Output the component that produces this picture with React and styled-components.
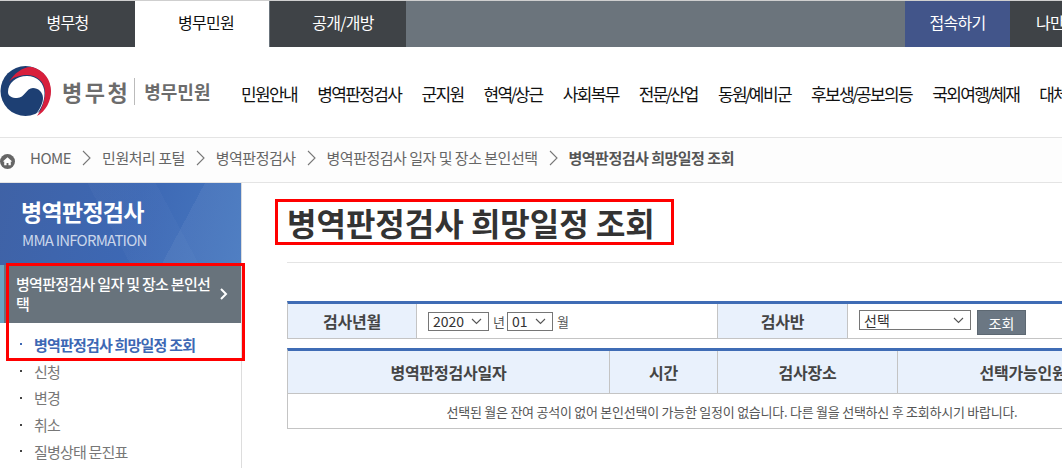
import React from 'react'
import styled, { createGlobalStyle } from 'styled-components'

const font = `"Noto Sans CJK KR", "Noto Sans", sans-serif`

const selectArrow = `url("data:image/svg+xml,%3Csvg xmlns='http://www.w3.org/2000/svg' width='11' height='7'%3E%3Cpath d='M1 1l4.500 4.500L10 1' fill='none' stroke='%23555' stroke-width='1.100'/%3E%3C/svg%3E")`

const GlobalStyle = createGlobalStyle`
  html, body {
    margin: 0;
    padding: 0;
    background: #fff;
    overflow: hidden;
  }
  body {
    font-family: ${font};
  }
`

const Page = styled.div`
  width: 1062px;
  height: 468px;
  overflow: hidden;
`

const TopBar = styled.div`
  display: flex;
  height: 46px;
  background: #6b747c;
  border-top: 1px solid #cfcfcf;
`

const TopTab = styled.a`
  width: ${(p) => p.$width}px;
  flex: none;
  box-sizing: border-box;
  display: flex;
  align-items: center;
  justify-content: ${(p) => (p.$start ? 'flex-start' : 'center')};
  padding: 0 0 4px ${(p) => p.$indent || 0}px;
  overflow: hidden;
  font-size: 16px;
  letter-spacing: -0.700px;
  white-space: nowrap;
  color: ${(p) => (p.$active ? '#111' : '#fff')};
  background: ${(p) => (p.$active ? '#fff' : p.$blue ? '#42558a' : '#3f4347')};
  margin-left: ${(p) => p.$gap || 0}px;
`

const Spacer = styled.div`
  flex: 1;
`

const Header = styled.header`
  display: flex;
  align-items: center;
  height: 90px;
  border-bottom: 1px solid #e4e4e4;
  white-space: nowrap;
`

const Logo = styled.div`
  width: 241px;
  flex: none;
  display: flex;
  align-items: center;
  margin-top: -2px;
`

const Emblem = styled.svg`
  width: 52px;
  height: 52px;
  flex: none;
`

const LogoMain = styled.span`
  margin-left: 10px;
  font-size: 22px;
  font-weight: 700;
  letter-spacing: 2.500px;
  color: #6c6c6c;
`

const LogoDivider = styled.i`
  width: 1px;
  height: 27px;
  margin: 0 9px 0 4px;
  background: #bbb;
`

const LogoSub = styled.span`
  font-size: 18px;
  font-weight: 700;
  color: #6c6c6c;
`

const MainNav = styled.nav`
  display: flex;
  gap: 20px;
  margin-top: 3px;
`

const NavLink = styled.a`
  font-size: 17px;
  letter-spacing: -1.600px;
  color: #111;
`

const NavSlash = styled.span`
  margin: 0 -1.100px;
`

const Breadcrumb = styled.div`
  display: flex;
  align-items: center;
  height: 45px;
  box-sizing: border-box;
  padding-bottom: 5px;
  border-bottom: 1px solid #e4e4e4;
  background: #fdfdfd;
  font-size: 15px;
  letter-spacing: -0.500px;
  color: #666;
  white-space: nowrap;
`

const HomeIcon = styled.svg`
  width: 15px;
  height: 15px;
  margin-right: 15px;
  margin-top: 8px;
`

const Chevron = styled.svg`
  width: 9px;
  height: 16px;
  margin: 0 11px 0 11px;
`

const Crumb = styled.span`
  font-weight: ${(p) => (p.$current ? 700 : 400)};
  color: ${(p) => (p.$current ? '#555' : '#666')};
`

const Body = styled.div`
  display: flex;
`

const Sidebar = styled.aside`
  position: relative;
  width: 242px;
  flex: none;
  height: 285px;
  border-right: 1px solid #ddd;
  box-sizing: border-box;
`

const SideTitle = styled.div`
  height: 82px;
  box-sizing: border-box;
  padding: 11px 0 0 21px;
  background:
    linear-gradient(118deg, transparent 72%, rgba(255, 255, 255, 0.05) 72%),
    linear-gradient(62deg, transparent 46%, rgba(255, 255, 255, 0.025) 46%, rgba(255, 255, 255, 0.025) 70%, transparent 70%),
    linear-gradient(105deg, #3f62a6 0%, #3d68b4 55%, #4778c0 100%);
  color: #fff;
`

const SideHeading = styled.div`
  font-size: 23px;
  font-weight: 700;
  line-height: 34px;
  letter-spacing: -0.700px;
`

const SideSub = styled.div`
  font-size: 15px;
  line-height: 20px;
  letter-spacing: -0.800px;
  color: #c9d5ea;
  margin: 2px 0 0 1px;
`

const SideActive = styled.div`
  display: flex;
  align-items: center;
  height: 58px;
  box-sizing: border-box;
  padding: 0 11px 0 12px;
  background: #68737c;
  border-left: 4px solid #6aa5c4;
  color: #fff;
  font-size: 15px;
  font-weight: 500;
  line-height: 20px;
  letter-spacing: -0.700px;
`

const SideActiveLabel = styled.span`
  flex: 1;
  max-width: 198px;
  word-break: break-all;
`

const SideArrow = styled.svg`
  width: 9px;
  height: 12px;
  flex: none;
  margin: 0 0 0 5px;
`

const SubList = styled.ul`
  list-style: none;
  margin: 0;
  padding: 8px 0 0 20px;
`

const SubItem = styled.li`
  display: flex;
  align-items: center;
  height: 26.750px;
  font-size: 15px;
  letter-spacing: -0.800px;
  font-weight: ${(p) => (p.$current ? 700 : 400)};
  color: ${(p) => (p.$current ? '#3d68b4' : '#777')};

  &::before {
    content: '';
    width: 2px;
    height: 2px;
    margin-right: 12px;
    background: ${(p) => (p.$current ? '#3d68b4' : '#444')};
  }
`

const RedBox = styled.div`
  position: absolute;
  left: 6px;
  top: 80px;
  width: 239px;
  height: 98px;
  box-sizing: border-box;
  border: 3px solid #f00;
`

const Content = styled.main`
  flex: 1;
  padding: 16px 0 0 33px;
  min-width: 0;
`

const Title = styled.h1`
  display: inline-block;
  margin: 0;
  padding: 0 16px 0 9px;
  height: 46px;
  box-sizing: border-box;
  border: 3px solid #f00;
  font-size: 32px;
  font-weight: 700;
  line-height: 40px;
  color: #333;
  white-space: nowrap;
`

const TitleRule = styled.div`
  height: 1px;
  margin: 17px 0 38px 12px;
  background: #e4e4e4;
`

const FormGrid = styled.div`
  display: grid;
  grid-template-columns: 129px 301px 130px 1fr;
  width: 862px;
  height: 38px;
  margin-left: 12px;
  box-sizing: border-box;
  border-top: 3px solid #3f6cb5;
  border-bottom: 1px solid #c4c4c4;
  border-left: 1px solid #c4c4c4;
`

const HeadCell = styled.div`
  display: flex;
  align-items: center;
  justify-content: center;
  background: #e9f1fc;
  border-right: 1px solid #c4c4c4;
  font-size: 16px;
  font-weight: 700;
  letter-spacing: -0.200px;
  color: #444;
  white-space: nowrap;
`

const FieldCell = styled.div`
  display: flex;
  align-items: ${(p) => (p.$top ? 'flex-start' : 'center')};
  padding: ${(p) => (p.$top ? '6px' : '0')} 0 0 ${(p) => p.$pad}px;
  border-right: ${(p) => (p.$divider ? '1px solid #c4c4c4' : 'none')};
  font-size: 13px;
  color: #555;
  white-space: nowrap;
`

const Select = styled.select`
  appearance: none;
  width: ${(p) => p.$width}px;
  height: ${(p) => (p.$tall ? 20 : 19)}px;
  margin: 0 3px 0 0;
  padding: 0 0 0 4px;
  box-sizing: border-box;
  border: 1px solid #767676;
  border-radius: 0;
  background: #fff ${selectArrow} no-repeat right 6px center;
  font-family: ${font};
  font-size: 14px;
  line-height: 17px;
  color: #333;
`

const Unit = styled.span`
  margin: 0 2px 0 1px;
  font-size: 13px;
`

const SearchButton = styled.button`
  width: 49px;
  height: 25px;
  margin: 0 0 0 3px;
  padding: 0;
  border: 1px solid #5d6872;
  background: #6b7783;
  color: #fff;
  font-family: ${font};
  font-size: 14px;
`

const ResultGrid = styled.div`
  display: grid;
  grid-template-columns: 322px 108px 180px 1fr;
  width: 862px;
  margin: 9px 0 0 12px;
  box-sizing: border-box;
  border-top: 3px solid #3f6cb5;
  border-left: 1px solid #c4c4c4;
`

const ColHead = styled(HeadCell)`
  height: 42px;
  border-bottom: 1px solid #c4c4c4;
`

const EmptyRow = styled.div`
  grid-column: 1 / -1;
  height: 35px;
  box-sizing: border-box;
  padding-left: 28px;
  line-height: 35px;
  text-align: center;
  border-right: 1px solid #c4c4c4;
  border-bottom: 1px solid #c4c4c4;
  font-size: 13px;
  letter-spacing: -0.250px;
  color: #555;
  white-space: nowrap;
`

const topTabs = [
  { label: '병무청', width: 135 },
  { label: '병무민원', width: 134, active: true, indent: 8 },
  { label: '공개/개방', width: 136, gap: 1, indent: 10 },
]

const navItems = [
  '민원안내', '병역판정검사', '군지원', '현역/상근', '사회복무', '전문/산업',
  '동원/예비군', '후보생/공보의등', '국외여행/체재', '대체역',
]

const crumbs = ['민원처리 포털', '병역판정검사', '병역판정검사 일자 및 장소 본인선택']

const subItems = ['신청', '변경', '취소', '질병상태 문진표']

const CrumbChevron = () => (
  <Chevron viewBox="0 0 9 16">
    <path d="M1 1l7 7-7 7" fill="none" stroke="#777" strokeWidth="1.100" />
  </Chevron>
)

const navLabel = (item) => {
  const [before, after] = item.split('/')
  if (!after) return item
  return (
    <>
      {before}
      <NavSlash>/</NavSlash>
      {after}
    </>
  )
}

const App = () => (
  <Page>
    <GlobalStyle />
    <TopBar>
      {topTabs.map((t) => (
        <TopTab key={t.label} $width={t.width} $active={t.active} $gap={t.gap} $indent={t.indent}>
          {t.label}
        </TopTab>
      ))}
      <Spacer />
      <TopTab $width={105} $blue>접속하기</TopTab>
      <TopTab $width={52} $start $indent={26}>나만의</TopTab>
    </TopBar>

    <Header>
      <Logo>
        <Emblem viewBox="0 0 52 52">
          <circle cx="25.500" cy="26" r="25" fill="#1d3f73" />
          <path d="M9 17C14 8 24 1 32 2C44 5 51 15 51 26C51 36 46 46 37 51C42 44 45 35 45 27C45 16 36 10 27 10C20 10 13 12 9 17Z" fill="#d81f3c" />
          <path d="M8 27C8 18 16 11 27 11C37 11 44.500 18 44.500 28C44.500 37 41 45 35 50.500C40 44 43 38 43 33C43 27 38 23 33 23C26 23 25 33 17 33C12 33 8 31 8 27Z" fill="#fff" />
        </Emblem>
        <LogoMain>병무청</LogoMain>
        <LogoDivider />
        <LogoSub>병무민원</LogoSub>
      </Logo>
      <MainNav>
        {navItems.map((item) => (
          <NavLink key={item}>{navLabel(item)}</NavLink>
        ))}
      </MainNav>
    </Header>

    <Breadcrumb>
      <HomeIcon viewBox="0 0 16 16">
        <circle cx="8" cy="8" r="8" fill="#666" />
        <path d="M8 3.500L3 8h1.500v4h2.500V9.500h2V12h2.500V8H13z" fill="#fff" />
      </HomeIcon>
      <Crumb>HOME</Crumb>
      {crumbs.map((c) => (
        <React.Fragment key={c}>
          <CrumbChevron />
          <Crumb>{c}</Crumb>
        </React.Fragment>
      ))}
      <CrumbChevron />
      <Crumb $current>병역판정검사 희망일정 조회</Crumb>
    </Breadcrumb>

    <Body>
      <Sidebar>
        <SideTitle>
          <SideHeading>병역판정검사</SideHeading>
          <SideSub>MMA INFORMATION</SideSub>
        </SideTitle>
        <SideActive>
          <SideActiveLabel>병역판정검사 일자 및 장소 본인선택</SideActiveLabel>
          <SideArrow viewBox="0 0 9 12">
            <path d="M2 1l5 5-5 5" fill="none" stroke="#fff" strokeWidth="2" />
          </SideArrow>
        </SideActive>
        <SubList>
          <SubItem $current>병역판정검사 희망일정 조회</SubItem>
          {subItems.map((s) => (
            <SubItem key={s}>{s}</SubItem>
          ))}
        </SubList>
        <RedBox />
      </Sidebar>

      <Content>
        <Title>병역판정검사 희망일정 조회</Title>
        <TitleRule />
        <FormGrid>
          <HeadCell>검사년월</HeadCell>
          <FieldCell $pad={11} $divider>
            <Select $width={61} defaultValue="2020"><option>2020</option></Select>
            <Unit>년</Unit>
            <Select $width={46} defaultValue="01"><option>01</option></Select>
            <Unit>월</Unit>
          </FieldCell>
          <HeadCell>검사반</HeadCell>
          <FieldCell $pad={11} $top>
            <Select $width={112} $tall defaultValue="선택"><option>선택</option></Select>
            <SearchButton>조회</SearchButton>
          </FieldCell>
        </FormGrid>
        <ResultGrid>
          <ColHead>병역판정검사일자</ColHead>
          <ColHead>시간</ColHead>
          <ColHead>검사장소</ColHead>
          <ColHead>선택가능인원</ColHead>
          <EmptyRow>선택된 월은 잔여 공석이 없어 본인선택이 가능한 일정이 없습니다. 다른 월을 선택하신 후 조회하시기 바랍니다.</EmptyRow>
        </ResultGrid>
      </Content>
    </Body>
  </Page>
)

export default App
